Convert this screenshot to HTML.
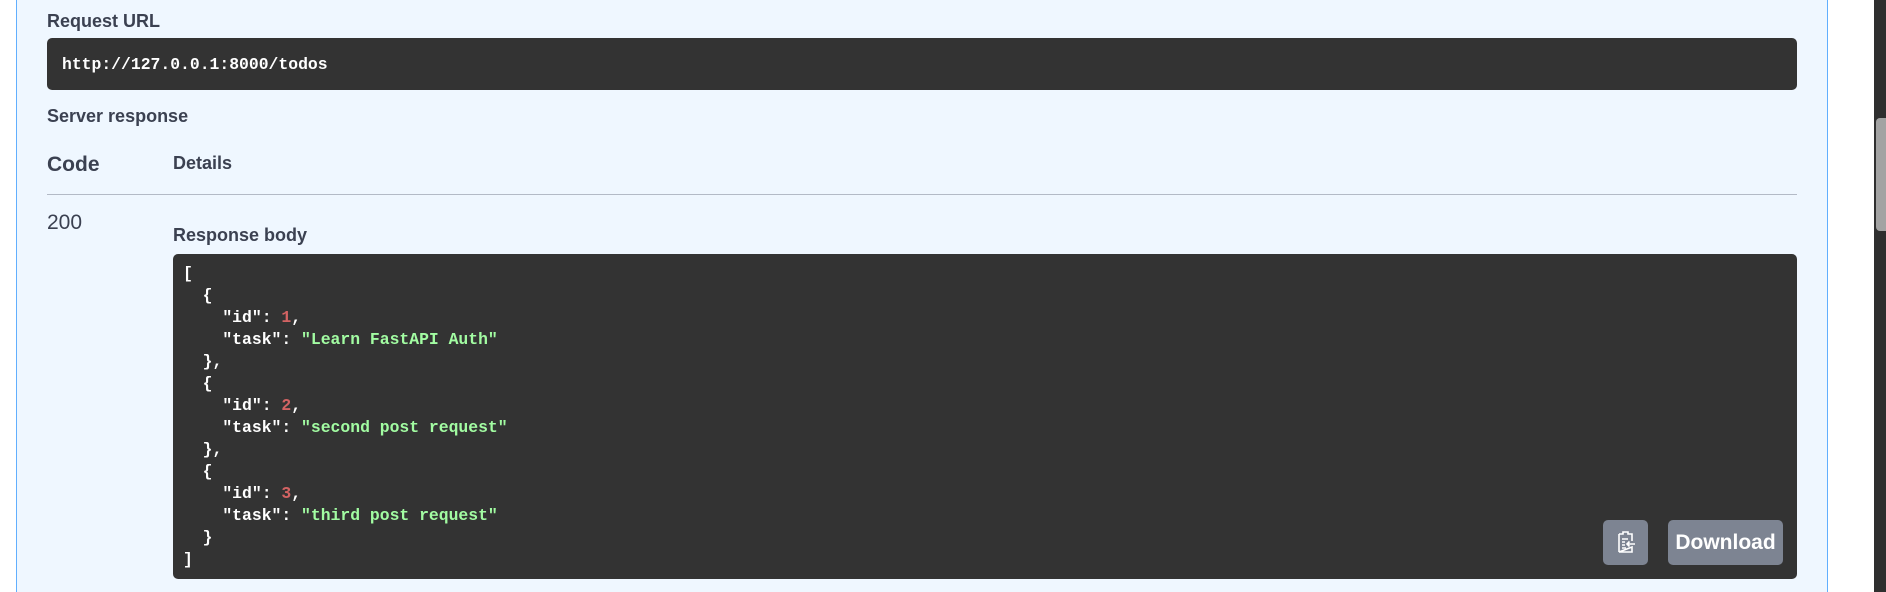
<!DOCTYPE html>
<html><head><meta charset="utf-8"><style>
*{margin:0;padding:0;box-sizing:border-box}
html,body{width:1886px;height:592px;overflow:hidden;background:#fff;font-family:"Liberation Sans",sans-serif;color:#3b4151}
#w{position:relative;width:1886px;height:592px;overflow:hidden}
.panel{position:absolute;left:16px;top:-2px;width:1812px;height:600px;background:#eff7ff;border-left:1px solid #61affe;border-right:1px solid #61affe}
.t{position:absolute;font-weight:bold;font-size:18px;color:#3b4151;white-space:nowrap}
.dark{position:absolute;background:#333;border-radius:5px}
.mono{font-family:"Liberation Mono",monospace;font-weight:bold;color:#fff}
pre{position:absolute;left:183px;top:263px;font-family:"Liberation Mono",monospace;font-weight:bold;font-size:16.4px;line-height:22px;color:#fff}
.n{color:#d36363}.s{color:#a2fca2}
.btn{position:absolute;background:#7d8492;border-radius:5px;top:520px;height:45px}
.track{position:absolute;left:1874px;top:0;width:12px;height:592px;background:#2f2f2f}
.thumb{position:absolute;left:1876px;top:118px;width:10px;height:113px;background:#a3a3a3;border-radius:4px 0 0 4px}
</style></head><body><div id="w">
<div class="panel"></div>
<div class="t" style="left:47px;top:11px">Request URL</div>
<div class="dark" style="left:47px;top:38px;width:1750px;height:52px"></div>
<div class="mono" style="position:absolute;left:62px;top:55px;font-size:16.4px">http://127.0.0.1:8000/todos</div>
<div class="t" style="left:47px;top:106px">Server response</div>
<div class="t" style="left:47px;top:153px;font-size:21px">Code</div>
<div class="t" style="left:173px;top:153px">Details</div>
<div style="position:absolute;left:47px;top:194px;width:1750px;height:1px;background:#b3bac6"></div>
<div style="position:absolute;left:47px;top:211px;font-size:21px;color:#3b4151">200</div>
<div class="t" style="left:173px;top:225px">Response body</div>
<div class="dark" style="left:173px;top:254px;width:1624px;height:325px"></div>
<pre>[
  {
    "id": <span class="n">1</span>,
    "task": <span class="s">"Learn FastAPI Auth"</span>
  },
  {
    "id": <span class="n">2</span>,
    "task": <span class="s">"second post request"</span>
  },
  {
    "id": <span class="n">3</span>,
    "task": <span class="s">"third post request"</span>
  }
]</pre>
<div class="btn" style="left:1603px;width:45px">
<svg width="45" height="45" viewBox="0 0 45 45" fill="none" stroke="#fff" stroke-width="1.6">
<path d="M16 14h4v-2h5v2h4v7M29 27v5h-13z"/>
<path d="M16 14v18"/>
<path d="M19 19h6M19 22h3M19 25h3M19 28h4"/>
<path d="M24 24h8M26.5 21.5l-2.5 2.5 2.5 2.5"/>
</svg></div>
<div class="btn" style="left:1668px;width:115px;color:#fff;font-weight:bold;font-size:21px;line-height:45px;text-align:center">Download</div>
<div class="track"></div><div class="thumb"></div>
</div></body></html>
